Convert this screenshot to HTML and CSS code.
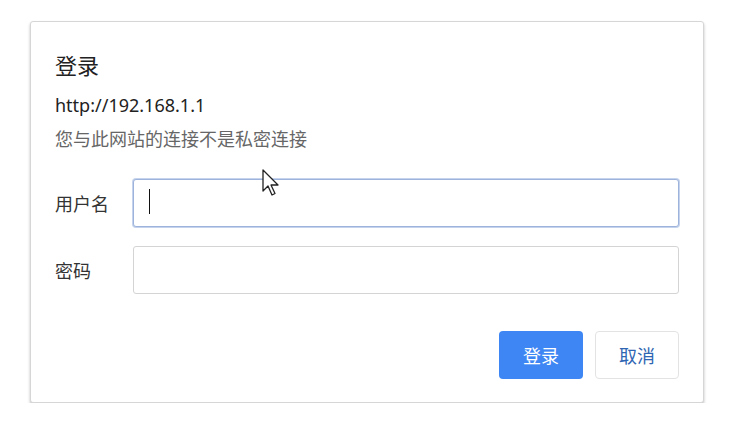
FILE: index.html
```html
<!DOCTYPE html>
<html lang="zh-CN">
<head>
  <meta charset="UTF-8" />
  <title>登录</title>
  <link rel="stylesheet" href="styles.css">
</head>
<body>

  <div class="dialog">
    <h2 class="titulo">登录</h2>
    <div class="url">http://192.168.1.1</div>
    <div class="aviso">您与此网站的连接不是私密连接</div>

    <form class="form-login">
      <div class="linha">
        <label for="usuario">用户名</label>
        <div class="campo">
          <input type="text" id="usuario" class="focado">
          <span class="caret"></span>
        </div>
      </div>
      <div class="linha">
        <label for="senha">密码</label>
        <div class="campo">
          <input type="password" id="senha">
        </div>
      </div>
      <div class="botoes">
        <button type="button" class="btn-entrar">登录</button>
        <button type="button" class="btn-cancelar">取消</button>
      </div>
    </form>
  </div>

  <!-- ponteiro do mouse -->
  <svg class="ponteiro" width="20" height="30" viewBox="0 0 20 30">
    <path d="M1 1 L1 22 L6 17 L10 26 L13 24.5 L9 16 L16 16 Z" fill="#fff" stroke="#222" stroke-width="1.3" stroke-linejoin="round"/>
  </svg>

</body>
</html>
```

FILE: styles.css
```css
body {
  margin: 0;
  background: #fff;
  font-family: "Noto Sans", "Noto Sans CJK SC", sans-serif;
  color: #333;
}

.dialog {
  margin: 21px 0 0 30px;
  width: 624px;
  padding: 26px 24px 23px 24px;
  background: #fff;
  border: 1px solid #d6d6d6;
  border-radius: 3px;
  box-shadow: 0 2px 3px rgba(0, 0, 0, 0.25);
}

.titulo {
  margin: 0;
  font-family: "Noto Sans CJK SC", sans-serif;
  font-size: 22px;
  font-weight: normal;
  line-height: 32px;
  color: #222;
}

.url {
  margin-top: 14px;
  font-size: 18px;
  line-height: 22px;
  color: #222;
}

.aviso {
  margin-top: 11px;
  font-family: "Noto Sans CJK SC", sans-serif;
  font-size: 18px;
  line-height: 22px;
  color: #666;
}

.form-login {
  margin-top: 30px;
}

.linha {
  display: flex;
  align-items: center;
  margin-bottom: 19px;
}

.linha label {
  width: 78px;
  flex-shrink: 0;
  font-family: "Noto Sans CJK SC", sans-serif;
  font-size: 18px;
  color: #333;
}

.campo {
  position: relative;
  flex: 1;
}

.campo input {
  display: block;
  width: 100%;
  box-sizing: border-box;
  height: 48px;
  padding: 0 16px;
  border: 1px solid #d4d4d4;
  border-radius: 3px;
  font-size: 16px;
  outline: none;
}

.campo input.focado {
  border: 1px solid #9db3dc;
  box-shadow: 0 0 0 1px #c5d3ec;
}

.caret {
  position: absolute;
  left: 16px;
  top: 10px;
  width: 1px;
  height: 25px;
  background: #111;
}

.botoes {
  display: flex;
  justify-content: flex-end;
  gap: 12px;
  margin-top: 37px;
}

.botoes button {
  width: 84px;
  height: 48px;
  border-radius: 4px;
  font-family: "Noto Sans CJK SC", sans-serif;
  font-size: 18px;
  cursor: pointer;
}

.btn-entrar {
  background-color: #3d86f4;
  border: none;
  color: #fff;
}

.btn-cancelar {
  background: #fff;
  border: 1px solid #e3e3e3;
  color: #2f66b3;
}

.ponteiro {
  position: absolute;
  left: 262px;
  top: 169px;
}
```
